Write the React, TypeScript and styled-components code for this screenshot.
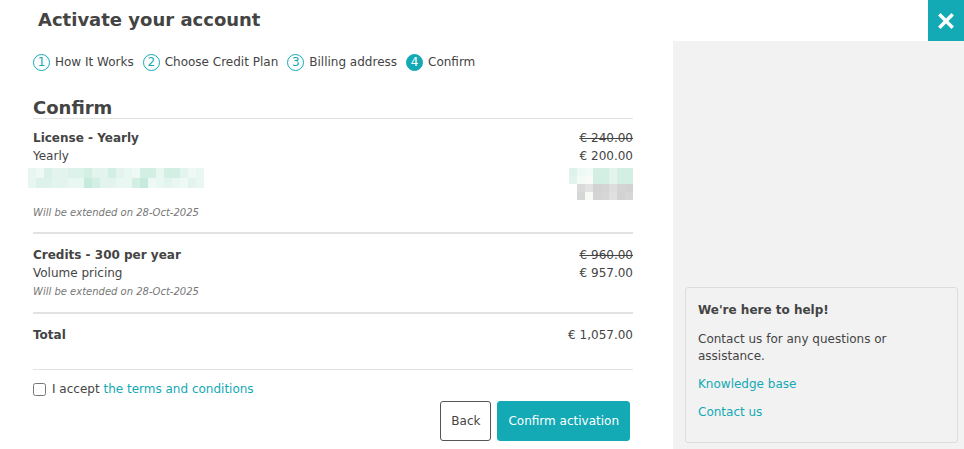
import styled, { createGlobalStyle } from 'styled-components';

const GlobalStyle = createGlobalStyle`
    body {
        margin: 0;
        font-family: 'DejaVu Sans', Verdana, sans-serif;
        color: #444;
        background: #fff;
    }
`;

const teal = '#13a9b5';

// blurred account details, one row of tiles per entry
const leftMosaic = [
    ['#e8f6f0', '#eef8f4', '#d9f1e8', '#e3f4ee', '#e3f4ee', '#dcf2ea', '#dcf2ea', '#d3efe4', '#e3f4ee', '#e3f4ee', '#d3efe4', '#e3f4ee', '#e9f7f2', '#eef8f4', '#d3efe4', '#d3efe4', '#e9f7f2', '#d3efe4', '#d3efe4', '#e3f4ee', '#eef8f4', '#e9f7f2'],
    ['#e8f6f0', '#dcf2ea', '#dcf2ea', '#e3f4ee', '#e3f4ee', '#e9f7f2', '#e9f7f2', '#c6ebdc', '#d3efe4', '#e3f4ee', '#e3f4ee', '#e9f7f2', '#e9f7f2', '#d3efe4', '#c6ebdc', '#eef8f4', '#e9f7f2', '#e3f4ee', '#e9f7f2', '#eef8f4', '#e3f4ee', '#e9f7f2'],
];

const rightMosaic = [
    ['#dcf2ea', '#eef8f4', '#f1faf6', '#d3efe4', '#d3efe4', '#e3f4ee', '#d3efe4', '#d3efe4'],
    ['#e3f4ee', '#f3fbf8', '#f8fbf8', '#d3efe4', '#d3efe4', '#e3f4ee', '#d3efe4', '#d3efe4'],
    ['#ffffff', '#dadada', '#e2e2e2', '#d2d2d2', '#d4d4d4', '#dddddd', '#d4d4d4', '#d2d2d2'],
    ['#ffffff', '#d6d6d6', '#f8faf6', '#d4d4d4', '#d6d6d6', '#e0e0e0', '#d2d2d2', '#d6d6d6'],
];

const steps = ['How It Works', 'Choose Credit Plan', 'Billing address', 'Confirm'];

const Mosaic = ({ rows, cell, rowHeight }: { rows: string[][]; cell: number; rowHeight: number }) => (
    <MosaicGrid>
        {rows.map((row, i) => (
            <MosaicRow key={i}>
                {row.map((c, j) => (
                    <MosaicCell key={j} $w={cell} $h={rowHeight} style={{ background: c }} />
                ))}
            </MosaicRow>
        ))}
    </MosaicGrid>
);

const CloseIcon = () => (
    <svg width='16' height='16' viewBox='0 0 16 16'>
        <path d='M2.5 2.5 L13.5 13.5 M13.5 2.5 L2.5 13.5' stroke='#fff' strokeWidth='3.4' strokeLinecap='square' />
    </svg>
);

const App = () => {
    return (
        <>
            <GlobalStyle />
            <Page>
                <Header>
                    <Title>Activate your account</Title>
                    <CloseButton aria-label='Close'>
                        <CloseIcon />
                    </CloseButton>
                </Header>
                <Body>
                    <Main>
                        <Steps>
                            {steps.map((s, i) => (
                                <Step key={s}>
                                    <StepNumber $active={i === steps.length - 1}>{i + 1}</StepNumber>
                                    {s}
                                </Step>
                            ))}
                        </Steps>

                        <Heading>Confirm</Heading>

                        <Item $top={10} $bottom={12}>
                            <ItemInfo>
                                <ItemName>License - Yearly</ItemName>
                                <ItemSub>Yearly</ItemSub>
                                <MosaicLeft>
                                    <Mosaic rows={leftMosaic} cell={8} rowHeight={10} />
                                </MosaicLeft>
                                <Note $gap={18}>Will be extended on 28-Oct-2025</Note>
                            </ItemInfo>
                            <Prices>
                                <OldPrice>€ 240.00</OldPrice>
                                <Price>€ 200.00</Price>
                                <MosaicRight>
                                    <Mosaic rows={rightMosaic} cell={8} rowHeight={8} />
                                </MosaicRight>
                            </Prices>
                        </Item>

                        <Item $top={12} $bottom={13}>
                            <ItemInfo>
                                <ItemName>Credits - 300 per year</ItemName>
                                <ItemSub>Volume pricing</ItemSub>
                                <Note $gap={3}>Will be extended on 28-Oct-2025</Note>
                            </ItemInfo>
                            <Prices>
                                <OldPrice>€ 960.00</OldPrice>
                                <Price>€ 957.00</Price>
                            </Prices>
                        </Item>

                        <TotalRow>
                            <ItemName>Total</ItemName>
                            <Price>€ 1,057.00</Price>
                        </TotalRow>

                        <Accept>
                            <Checkbox type='checkbox' />
                            <span>
                                I accept <Link href='#'>the terms and conditions</Link>
                            </span>
                        </Accept>

                        <Actions>
                            <BackButton>Back</BackButton>
                            <PrimaryButton>Confirm activation</PrimaryButton>
                        </Actions>
                    </Main>

                    <Sidebar>
                        <HelpBox>
                            <HelpTitle>We're here to help!</HelpTitle>
                            <HelpText>Contact us for any questions or assistance.</HelpText>
                            <HelpLink href='#'>Knowledge base</HelpLink>
                            <HelpLink href='#'>Contact us</HelpLink>
                        </HelpBox>
                    </Sidebar>
                </Body>
            </Page>
        </>
    );
};

export default App;

const Page = styled.div`
    width: 964px;
    height: 449px;
    display: flex;
    flex-direction: column;
    overflow: hidden;
`;

const Header = styled.div`
    height: 41px;
    display: flex;
    align-items: center;
    justify-content: space-between;
    flex-shrink: 0;
`;

const Title = styled.h1`
    margin: 0 0 2px 38px;
    font-size: 18px;
    font-weight: bold;
    color: #444;
`;

const CloseButton = styled.button`
    width: 36px;
    height: 41px;
    border: none;
    padding: 0;
    background: ${teal};
    display: flex;
    align-items: center;
    justify-content: center;
    cursor: pointer;
`;

const Body = styled.div`
    flex: 1;
    display: flex;
`;

const Main = styled.div`
    width: 600px;
    padding: 12px 40px 0 33px;
    display: flex;
    flex-direction: column;
`;

const Steps = styled.div`
    display: flex;
    gap: 9px;
    font-size: 12px;
    height: 18px;
    align-items: center;
`;

const Step = styled.div`
    display: flex;
    align-items: center;
    gap: 5px;
    color: #444;
`;

const StepNumber = styled.span<{ $active: boolean }>`
    width: 17px;
    height: 17px;
    box-sizing: border-box;
    border-radius: 50%;
    border: 1.5px solid ${teal};
    background: ${(p) => (p.$active ? teal : 'transparent')};
    color: ${(p) => (p.$active ? '#fff' : teal)};
    font-size: 12px;
    line-height: 1;
    display: flex;
    align-items: center;
    justify-content: center;
`;

const Heading = styled.h2`
    margin: 26px 0 0;
    padding-bottom: 0;
    font-size: 18px;
    font-weight: bold;
    line-height: 21px;
    border-bottom: 1px solid #e3e3e3;
`;

const Item = styled.div<{ $top: number; $bottom: number }>`
    display: flex;
    justify-content: space-between;
    padding: ${(p) => p.$top}px 0 ${(p) => p.$bottom}px;
    border-bottom: 2px solid #e2e2e2;
    font-size: 12px;
    line-height: 18px;
`;

const ItemInfo = styled.div`
    display: flex;
    flex-direction: column;
`;

const ItemName = styled.div`
    font-weight: bold;
    font-size: 12px;
`;

const ItemSub = styled.div`
    color: #444;
`;

const Note = styled.div<{ $gap: number }>`
    margin-top: ${(p) => p.$gap}px;
    font-size: 10px;
    font-style: italic;
    color: #777;
    line-height: 14px;
`;

const Prices = styled.div`
    display: flex;
    flex-direction: column;
    align-items: flex-end;
`;

const Price = styled.div`
    font-size: 12px;
    color: #444;
`;

const OldPrice = styled(Price)`
    text-decoration: line-through;
`;

const MosaicGrid = styled.div`
    display: flex;
    flex-direction: column;
`;

const MosaicRow = styled.div`
    display: flex;
`;

const MosaicCell = styled.div<{ $w: number; $h: number }>`
    width: ${(p) => p.$w}px;
    height: ${(p) => p.$h}px;
`;

const MosaicLeft = styled.div`
    margin: 3px 0 0 -5px;
`;

const MosaicRight = styled.div`
    margin-top: 3px;
`;

const TotalRow = styled.div`
    display: flex;
    justify-content: space-between;
    align-items: center;
    padding: 12px 0 25px;
    line-height: 18px;
    border-bottom: 1px solid #e3e3e3;
`;

const Accept = styled.label`
    display: flex;
    align-items: center;
    gap: 6px;
    margin-top: 12px;
    font-size: 12px;
    color: #444;
`;

const Checkbox = styled.input`
    margin: 0;
    width: 13px;
    height: 13px;
`;

const Link = styled.a`
    color: ${teal};
    text-decoration: none;
`;

const Actions = styled.div`
    display: flex;
    justify-content: flex-end;
    gap: 6px;
    margin: 5px 3px 0 0;
`;

const BaseButton = styled.button`
    height: 40px;
    font-family: 'DejaVu Sans', Verdana, sans-serif;
    font-size: 12px;
    border-radius: 3px;
    cursor: pointer;
`;

const BackButton = styled(BaseButton)`
    padding: 0 10px;
    background: #fff;
    color: #444;
    border: 1px solid #555;
`;

const PrimaryButton = styled(BaseButton)`
    padding: 0 10px;
    background: ${teal};
    color: #fff;
    border: 1px solid ${teal};
`;

const Sidebar = styled.div`
    flex: 1;
    background: #f2f2f2;
    display: flex;
    flex-direction: column;
    justify-content: flex-end;
    padding: 0 6px 6px 12px;
`;

const HelpBox = styled.div`
    border: 1px solid #dcdcdc;
    border-radius: 3px;
    padding: 14px 12px 21px;
    font-size: 12px;
    line-height: 17px;
    display: flex;
    flex-direction: column;
`;

const HelpTitle = styled.div`
    font-weight: bold;
    color: #444;
`;

const HelpText = styled.div`
    margin-top: 12px;
    color: #444;
`;

const HelpLink = styled.a`
    margin-top: 11px;
    color: ${teal};
    text-decoration: none;
`;
